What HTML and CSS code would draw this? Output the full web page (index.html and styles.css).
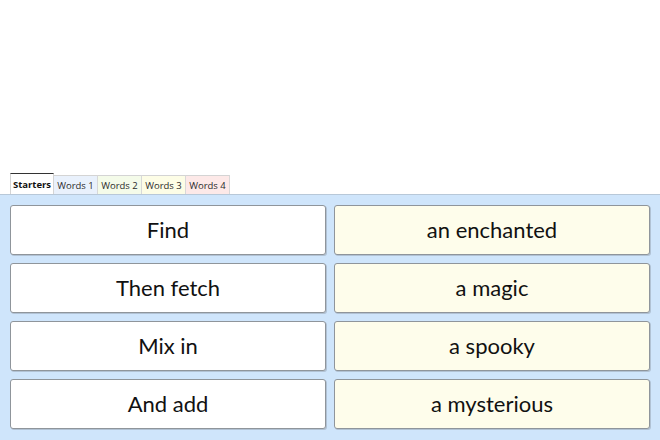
FILE: index.html
```html
<!DOCTYPE html>
<html>
<head>
<meta charset="utf-8">
<link rel="stylesheet" href="styles.css">
</head>
<body>
<div class="page">
  <div class="spacer"></div>
  <div class="tabs">
    <div class="tab active">Starters</div>
    <div class="tab t1">Words 1</div>
    <div class="tab t2">Words 2</div>
    <div class="tab t3">Words 3</div>
    <div class="tab t4">Words 4</div>
  </div>
  <div class="panel">
    <div class="card">Find</div>
    <div class="card alt">an enchanted</div>
    <div class="card">Then fetch</div>
    <div class="card alt">a magic</div>
    <div class="card">Mix in</div>
    <div class="card alt">a spooky</div>
    <div class="card">And add</div>
    <div class="card alt">a mysterious</div>
  </div>
</div>
</body>
</html>
```
FILE: styles.css
```css
html, body {
  margin: 0;
  padding: 0;
  background: #ffffff;
}
.page {
  width: 660px;
  height: 440px;
  display: flex;
  flex-direction: column;
  overflow: hidden;
}
.spacer {
  height: 173px;
  flex: none;
}
.tabs {
  display: flex;
  align-items: flex-end;
  padding-left: 10px;
  height: 21px;
  flex: none;
}
.tab {
  width: 44px;
  height: 19px;
  box-sizing: border-box;
  border-top: 1px solid #d4d4d4;
  border-right: 1px solid #d8d8d8;
  font-family: "Open Sans", "DejaVu Sans", sans-serif;
  font-size: 9.5px;
  color: #2a2a2a;
  display: flex;
  align-items: center;
  justify-content: center;
  white-space: nowrap;
}
.tab.active {
  height: 21px;
  background: #ffffff;
  border-top: 1px solid #333;
  border-left: 1px solid #d4d4d4;
  border-right: 1px solid #d4d4d4;
  font-weight: bold;
  color: #111;
}
.t1 { background: #e9f1fc; }
.t2 { background: #f4fbe9; }
.t3 { background: #fdfde6; }
.t4 { background: #fde9e8; }
.panel {
  flex: 1;
  background: #cfe5fb;
  border-top: 1px solid #b8c8d8;
  padding: 10px 10px 0 10px;
  display: grid;
  grid-template-columns: 316px 316px;
  grid-auto-rows: 50px;
  column-gap: 8px;
  row-gap: 8px;
  align-content: start;
}
.card {
  box-sizing: border-box;
  background: #ffffff;
  border: 1px solid #8f959b;
  border-radius: 3px;
  box-shadow: 1px 1px 0 rgba(120,130,140,0.35);
  display: flex;
  align-items: center;
  justify-content: center;
  font-family: "Lato", "Open Sans", sans-serif;
  font-size: 22px;
  color: #111;
  padding-bottom: 2px;
}
.card.alt {
  background: #fefdeb;
}
```
